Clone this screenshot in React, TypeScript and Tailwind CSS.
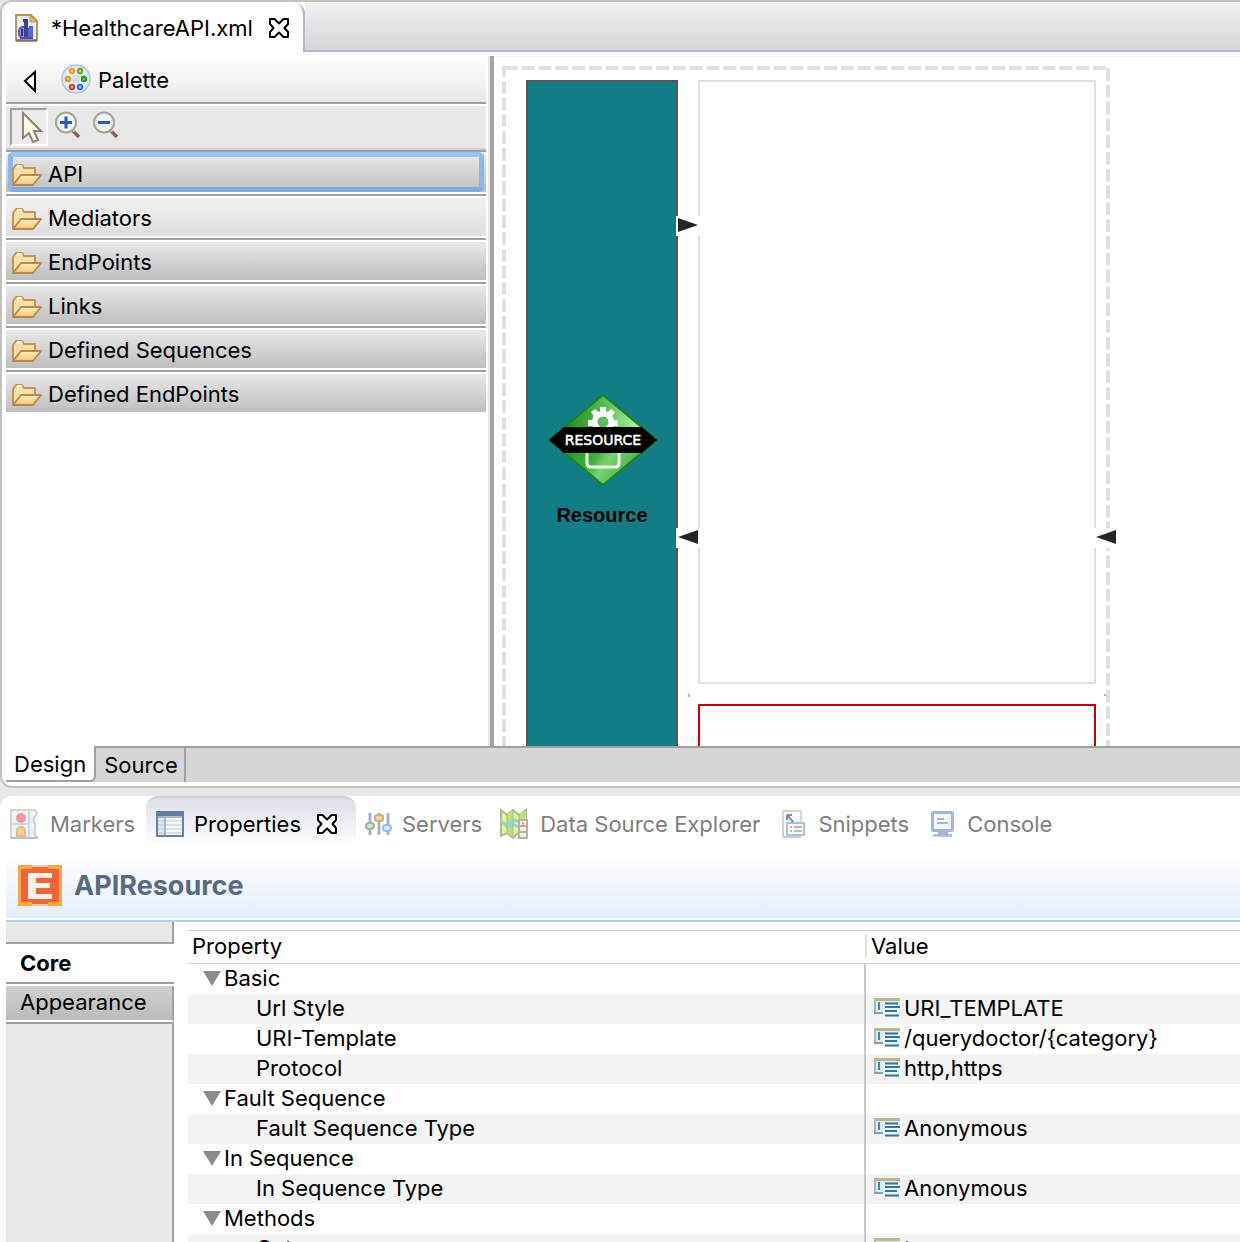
import React from "react";

function CloseIcon() {
  return (
    <svg className="h-6 w-6 shrink-0" viewBox="0 0 24 24" fill="#fff" stroke="#000" strokeWidth="2" strokeLinejoin="round" aria-hidden="true">
      <path d="M3 3h4.500l4.500 4.500 4.500-4.500H21v5l-3.500 4 3.500 4v5h-4.500l-4.500-4.500-4.500 4.500H3v-5l3.500-4L3 8z" />
    </svg>
  );
}

function FileIcon() {
  return (
    <svg className="h-7 w-6 shrink-0" viewBox="0 0 24 28" aria-hidden="true">
      <path d="M1 1h15l6 6v20H1z" fill="#e9edfa" />
      <path d="M1 27V1h15l6 6v20" fill="none" stroke="#b8985a" strokeWidth="2" />
      <path d="M15 1l7 7h-7z" fill="#e3bd6c" stroke="#b8985a" strokeWidth="1" />
      <path d="M1 26.500h21" stroke="#857052" strokeWidth="2.500" />
      <rect x="4" y="13" width="10" height="11" rx="4" fill="#8f98e0" stroke="#5a60c4" strokeWidth="2" />
      <path d="M8 5h5v18H9V8H8z" fill="#3f3f94" />
      <path d="M14 12h4v12h-4z" fill="#5c62cc" />
      <path d="M7 15v7" stroke="#303080" strokeWidth="2" />
      <path d="M5 24h13" stroke="#4b50b8" strokeWidth="2" />
    </svg>
  );
}

function PaletteIcon() {
  return (
    <svg className="h-8 w-8 shrink-0" viewBox="0 0 32 32" aria-hidden="true">
      <circle cx="16" cy="16" r="14" fill="#dfe9f6" stroke="#b4c6e2" strokeWidth="1.500" />
      <circle cx="16" cy="16" r="11" fill="#eef4fb" />
      <circle cx="16" cy="16" r="4" fill="#d0deef" />
      <g strokeWidth="2">
        <circle cx="12" cy="8" r="2.200" fill="#ffd75a" stroke="#f39a1f" />
        <circle cx="20" cy="8" r="2.200" fill="#c6e87a" stroke="#66ac20" />
        <circle cx="8" cy="16" r="2.200" fill="#ffdb8e" stroke="#ee8c1c" />
        <circle cx="24" cy="16" r="2.200" fill="#74c95a" stroke="#27941a" />
        <circle cx="12" cy="24" r="2.200" fill="#f29a96" stroke="#d44046" />
        <circle cx="20" cy="24" r="2.200" fill="#9cc7f7" stroke="#2f74d8" />
      </g>
    </svg>
  );
}

function MagnifierIcon({ plus }: { plus?: boolean }) {
  return (
    <svg className="h-7 w-7" viewBox="0 0 28 28" aria-hidden="true">
      <path d="M18 19l7 7" stroke="#866155" strokeWidth="3.500" />
      <path d="M17.500 17.500l3 3" stroke="#c9bfae" strokeWidth="3" />
      <circle cx="12" cy="11.500" r="10" fill="#edf4fb" stroke="#a9a389" strokeWidth="2" />
      <path d={plus ? "M6 11.500h12M12 5.500v12" : "M6 11.500h12"} stroke="#3a53b6" strokeWidth="3" />
    </svg>
  );
}

function FolderIcon() {
  return (
    <svg className="h-6 w-8 shrink-0" viewBox="0 0 32 24" aria-hidden="true">
      <defs>
        <linearGradient id="folderFill" x1="0" y1="0" x2="0" y2="1">
          <stop offset="0" stopColor="#fff0c4" />
          <stop offset="1" stopColor="#efc878" />
        </linearGradient>
      </defs>
      <path d="M3 22V6l3-4h6l2 3h11v7" fill="#f7dfa8" stroke="#c4935a" strokeWidth="2" strokeLinejoin="round" />
      <path d="M3 22l8-10h20l-8 10z" fill="url(#folderFill)" stroke="#bc8648" strokeWidth="2" strokeLinejoin="round" />
      <path d="M7 3h5" stroke="#fff6e6" strokeWidth="2" />
    </svg>
  );
}

function MarkersIcon() {
  return (
    <svg className="h-8 w-8 shrink-0" viewBox="0 0 32 32" aria-hidden="true">
      <path d="M3 2h22v28H3z" fill="#edf3fb" />
      <path d="M3 30V2h23" fill="none" stroke="#dcd6b8" strokeWidth="2" />
      <path d="M4 16h18M21 3v26" stroke="#ccd9ec" strokeWidth="2" />
      <path d="M26 2q4 1 2 5-3 3-2 7 2 2 1 7-2 5 2 8" fill="none" stroke="#c3cede" strokeWidth="2" />
      <path d="M2 30h28" stroke="#b5c0d6" strokeWidth="2" />
      <circle cx="13" cy="10" r="5" fill="#f09aa0" />
      <path d="M9 28v-5a4 4 0 0 1 8 0v5z" fill="#f7d493" stroke="#edb878" strokeWidth="2" />
    </svg>
  );
}

function PropertiesIcon() {
  return (
    <svg className="h-7 w-8 shrink-0" viewBox="0 0 32 28" aria-hidden="true">
      <rect x="3" y="2" width="26" height="24" fill="#f5f8fd" stroke="#6c7e9b" strokeWidth="2" />
      <path d="M3 2h26v4H3z" fill="#657a9e" />
      <path d="M4 6h7v19H4z" fill="#dce6f3" />
      <path d="M4 11h24M4 15h24M4 19h24M4 23h24" stroke="#c1c7d1" />
      <path d="M4 7h24M11 7v18" stroke="#98a5ba" strokeWidth="1.500" />
    </svg>
  );
}

function ServersIcon() {
  return (
    <svg className="h-7 w-7 shrink-0" viewBox="0 0 28 28" aria-hidden="true">
      <path d="M6 3v22M15 3v22M24 3v22" stroke="#a8aecb" strokeWidth="3" />
      <rect x="2" y="13" width="8" height="6" rx="3" fill="#d2e6ca" stroke="#9dbb9b" strokeWidth="2" />
      <rect x="11" y="5" width="8" height="6" rx="2" fill="#f2d7a0" stroke="#ceb083" strokeWidth="2" />
      <rect x="19" y="15" width="8" height="6" rx="3" fill="#d5e8f7" stroke="#9bb9d4" strokeWidth="2" />
    </svg>
  );
}

function DataSourceIcon() {
  return (
    <svg className="h-8 w-8 shrink-0" viewBox="0 0 32 32" aria-hidden="true">
      <path d="M3 2l6 5 6-5 6 5 7-5v24l-7-2-6 6-6-5-6 3z" fill="#dcfa94" stroke="#b2b99a" strokeWidth="2" />
      <path d="M9 6l6-4v27l-6-4zM21 6l7-4v25l-7-2z" fill="#bfe07c" />
      <path d="M3 13l5 4 5-2 4-3 4 2M7 19l5-1 5-1 4 2" stroke="#9bd3d2" strokeWidth="3" fill="none" />
      <path d="M9 6v20M15 2v27M21 5v20" stroke="#a8b98a" strokeWidth="1" />
      <rect x="21" y="12" width="8" height="18" fill="#f1efe4" stroke="#b9b39d" strokeWidth="2" />
      <path d="M21 18h8M21 24h8" stroke="#b9b39d" strokeWidth="2" />
      <path d="M24 15.500h2" stroke="#e57f76" strokeWidth="2" />
    </svg>
  );
}

function SnippetsIcon() {
  return (
    <svg className="h-8 w-7 shrink-0" viewBox="0 0 28 32" aria-hidden="true">
      <path d="M3 3h18v26H3z" fill="#fafbfd" />
      <path d="M3 29V3h18v12" fill="none" stroke="#dfd9be" strokeWidth="2" />
      <path d="M3 17v12h18" fill="none" stroke="#c6cfdd" strokeWidth="2" />
      <path d="M7 7h5M7 7v5M7 7l7 8" stroke="#8591aa" strokeWidth="2" fill="none" />
      <rect x="7" y="15" width="17" height="12" fill="#f7fafe" stroke="#adc2df" strokeWidth="2" />
      <path d="M10 19h2M14 19h8" stroke="#eba2a2" strokeWidth="2" />
      <path d="M10 23h2M14 23h8" stroke="#a4cdb0" strokeWidth="2" />
    </svg>
  );
}

function ConsoleIcon() {
  return (
    <svg className="h-7 w-7 shrink-0" viewBox="0 0 28 28" aria-hidden="true">
      <rect x="3.500" y="2.500" width="20" height="18" rx="1" fill="#f4f7fd" stroke="#a3b9dc" strokeWidth="3" />
      <path d="M8 9h7M8 13h11" stroke="#a7b3cc" strokeWidth="2" />
      <path d="M9 21h10v4H9z" fill="#a3b4d2" />
      <path d="M4 25.500h19" stroke="#a3b9dc" strokeWidth="2.500" />
    </svg>
  );
}

function ResourceLogo() {
  return (
    <svg className="h-[44px] w-[44px] shrink-0" viewBox="0 0 44 44" aria-hidden="true">
      <path d="M0 1h14v2h16V1h14v41H30v-2H14v2H0z" fill="#f7a843" />
      <path d="M14 1h16v2H14zM14 40h16v2H14z" fill="#f9c9b4" />
      <path d="M3 5h11V3h16v2h11v33H30v2H14v-2H3z" fill="#f0643a" />
      <path d="M10 9h24v5H18v5h14v5H18v6h16v5H10z" fill="#fdf1ec" />
    </svg>
  );
}

function FieldIcon() {
  return (
    <svg className="h-5 w-[26px] shrink-0" viewBox="0 0 26 20" aria-hidden="true">
      <path d="M1 1h25v14H1z" fill="#d9edf3" />
      <path d="M0 1.500h26" stroke="#beb78c" strokeWidth="3" />
      <path d="M1 2v14" stroke="#b5b6a4" strokeWidth="2" />
      <path d="M0 15h9" stroke="#8e9fba" strokeWidth="2" />
      <path d="M5 4v8" stroke="#4a84ab" strokeWidth="2" />
      <path d="M9 5h17v14H9z" fill="#eaf5f8" />
      <path d="M11 5.500h13M11 9h15M11 13h12M11 17.500h14" stroke="#39719f" strokeWidth="2" />
    </svg>
  );
}

function ResourceDiamond() {
  return (
    <svg className="h-[94px] w-[112px]" viewBox="0 0 112 94" role="img" aria-label="Resource">
      <defs>
        <linearGradient id="diamondFill" x1="0" y1="0" x2="1" y2="0">
          <stop offset="0.100" stopColor="#138a18" />
          <stop offset="0.480" stopColor="#4fb84d" />
          <stop offset="0.850" stopColor="#b4f7a9" />
        </linearGradient>
        <linearGradient id="diamondLow" x1="0" y1="0" x2="1" y2="0.300">
          <stop offset="0.150" stopColor="#1e9324" />
          <stop offset="0.500" stopColor="#41ae42" />
          <stop offset="0.620" stopColor="#7ad274" />
          <stop offset="0.850" stopColor="#4fb94e" />
        </linearGradient>
      </defs>
      <path d="M57 2L111 47H3z" fill="url(#diamondFill)" />
      <path d="M3 47h108L57 92z" fill="url(#diamondLow)" />
      <path d="M57 2l54 45-54 45L3 47z" fill="none" stroke="#237f20" strokeWidth="2" strokeLinejoin="round" />
      <g fill="#fff">
        <circle cx="57" cy="29" r="11" />
        <path d="M54 14h6v6h-6zM42 27h6v6h-6zM66 27h6v6h-6z" />
        <path d="M45 19l4-3 5 5-5 4zM69 19l-4-3-5 5 5 4z" />
      </g>
      <circle cx="57" cy="29" r="5.500" fill="#5bbd55" />
      <path d="M41 58v12q0 4 4 4h24q4 0 4-4V58" fill="none" stroke="#edffeb" strokeWidth="3" />
      <path d="M18 34h78l15 13-15 13H18L3 47z" fill="#000" />
      <text x="57" y="52" textAnchor="middle" fill="#fff" stroke="#fff" strokeWidth="0.500" fontSize="14" fontFamily="DejaVu Sans, sans-serif">RESOURCE</text>
    </svg>
  );
}

function Arrow({ left }: { left?: boolean }) {
  return (
    <svg className="block h-5 w-6 bg-white" viewBox="0 0 24 20" aria-hidden="true">
      <path d={left ? "M22 2v14L2 9z" : "M2 2v14l20-7z"} fill="#262626" />
    </svg>
  );
}

const drawers = [
  { name: "API", state: "focused" },
  { name: "Mediators", state: "light" },
  { name: "EndPoints", state: "plain" },
  { name: "Links", state: "plain" },
  { name: "Defined Sequences", state: "plain" },
  { name: "Defined EndPoints", state: "plain" },
];

const drawerStyle: Record<string, string> = {
  focused: "bg-linear-to-b from-[#e8e8e8] to-[#bfbfbf]",
  light: "bg-linear-to-b from-[#f2f2f2] to-[#dedede]",
  plain: "bg-linear-to-b from-[#e8e8e8] to-[#bfbfbf]",
};

function Palette() {
  return (
    <aside className="flex w-[480px] shrink-0 flex-col">
      <header className="flex h-[46px] shrink-0 items-center bg-linear-to-b from-white to-[#e8e8e8] pt-1">
        <button type="button" aria-label="Collapse palette" className="mr-5 ml-4 h-6 w-4">
          <svg className="h-6 w-4" viewBox="0 0 16 24" aria-hidden="true">
            <path d="M3 12L13 3v19z" fill="#fff" stroke="#000" strokeWidth="2" />
          </svg>
        </button>
        <span className="ml-0.5 flex items-center gap-1.5 pb-1"><PaletteIcon /><span className="pt-0.5">Palette</span></span>
      </header>
      <div className="h-1 shrink-0 border-t-2 border-[#a0a0a0] bg-white" />
      <div className="flex h-11 shrink-0 items-center border-b-2 border-[#d0d0d0] bg-[#e8e8e8] pl-1">
        <button type="button" aria-label="Select" aria-pressed="true" className="flex h-[38px] w-[38px] items-center justify-center border-2 border-t-[#a0a0a0] border-r-white border-b-white border-l-[#a0a0a0] bg-[#ececec]">
          <svg className="ml-1 h-8 w-6" viewBox="0 0 24 32" aria-hidden="true">
            <path d="M4 2v25l6-5 4 9 5-2-4-9h7z" fill="#fffbe6" stroke="#8a8574" strokeWidth="2" />
          </svg>
        </button>
        <button type="button" aria-label="Zoom in" className="ml-1.5 pb-1"><MagnifierIcon plus /></button>
        <button type="button" aria-label="Zoom out" className="ml-2.5 pb-1"><MagnifierIcon /></button>
      </div>
      <div className="flex flex-col">
        {drawers.map((d) => (
          <div key={d.name} className="border-t-2 border-[#a0a0a0] bg-white pt-0.5 pb-0.5">
            <button type="button" className={`relative flex h-[38px] w-full items-center pl-1 text-left ${drawerStyle[d.state]}`}>
              {d.state === "focused" && <span className="absolute -top-0.5 right-0.5 bottom-0 left-0.5 rounded-[5px] border-[5px] border-t-[#93c4f7] border-r-[#89b7ea] border-b-[#82acde] border-l-[#89b7ea]" />}
              <span className="relative flex items-center gap-1.5 pt-1"><FolderIcon /><span className="pb-0.5">{d.name}</span></span>
            </button>
          </div>
        ))}
      </div>
    </aside>
  );
}

function Canvas() {
  return (
    <main className="relative min-w-0 flex-1 overflow-hidden border-t border-[#eeeeee]">
      <svg className="absolute top-2 left-2 h-[800px] w-[608px]" viewBox="0 0 608 800" fill="none" stroke="#e0e0e0" strokeWidth="4" strokeDasharray="12.800 4" aria-hidden="true">
        <path d="M3 3H606" />
        <path d="M2 1V800" strokeDashoffset="2" />
        <path d="M606 1V800" strokeDashoffset="-2" />
      </svg>
      <section className="absolute top-[23px] left-8 flex h-[720px] w-[152px] flex-col items-center border-2 border-[#585858] bg-[#117d85] pt-[311px]">
        <ResourceDiamond />
        <h2 className="mt-4 font-['Liberation_Sans',sans-serif] text-[20px] leading-6 font-bold">Resource</h2>
      </section>
      <div className="absolute top-[23px] left-[204px] h-[604px] w-[398px] border-2 border-[#e0e0e0]" />
      <div className="absolute top-[647px] left-[204px] h-[160px] w-[398px] border-2 border-[#c9000c]" />
      <div className="absolute top-[159px] left-[182px]"><Arrow /></div>
      <div className="absolute top-[471px] left-[182px]"><Arrow left /></div>
      <div className="absolute top-[471px] left-[600px]"><Arrow left /></div>
      <div className="absolute top-[637px] left-[194px] h-[3px] w-0.5 bg-[#b4b4b4]" />
      <div className="absolute top-[637px] left-[610px] h-0.5 w-0.5 bg-[#b4b4b4]" />
    </main>
  );
}

function Editor() {
  return (
    <section className="flex min-h-0 flex-[784] flex-col overflow-hidden rounded-l-xl border-y-2 border-l-2 border-[#c2c2ba] bg-white">
      <div role="tablist" className="flex h-[50px] shrink-0">
        <button role="tab" type="button" aria-selected="true" className="flex items-center rounded-tr-xl border-r-2 border-[#b4b8cc] bg-white pt-0.5 pr-3 pl-[13px]">
          <FileIcon />
          <span className="ml-3">*HealthcareAPI.xml</span>
          <span className="ml-3.5"><CloseIcon /></span>
        </button>
        <div className="flex-1 border-b-2 border-[#b4b8cc] bg-linear-to-b from-[#f2f2f2] to-[#d6d6d6]" />
      </div>
      <div className="flex min-h-0 flex-1 pt-1 pl-1">
        <Palette />
        <div className="ml-0.5 w-1.5 shrink-0 border-r-4 border-l-2 border-r-[#a3a3a3] border-l-[#e8e8e8]" />
        <Canvas />
      </div>
      <div role="tablist" className="mb-1 ml-1 flex h-9 shrink-0 bg-[#d6d6d6]">
        <button role="tab" type="button" aria-selected="true" className="rounded-br-md border-r-2 border-b-2 border-[#a0a0a0] bg-white px-2 pt-0.5">Design</button>
        <button role="tab" type="button" className="border-t-2 border-r-2 border-[#a0a0a0] pr-1.5 pl-2">Source</button>
        <div className="flex-1 border-t-2 border-[#a0a0a0]" />
      </div>
    </section>
  );
}

function ViewTab({ icon, name }: { icon: React.ReactNode; name: string }) {
  return (
    <button role="tab" type="button" className="flex items-center gap-2.5 whitespace-nowrap text-[#808080]">
      {icon}
      {name}
    </button>
  );
}

type Row = { label: string; value?: string };
const rows: Row[] = [
  { label: "Basic" },
  { label: "Url Style", value: "URI_TEMPLATE" },
  { label: "URI-Template", value: "/querydoctor/{category}" },
  { label: "Protocol", value: "http,https" },
  { label: "Fault Sequence" },
  { label: "Fault Sequence Type", value: "Anonymous" },
  { label: "In Sequence" },
  { label: "In Sequence Type", value: "Anonymous" },
  { label: "Methods" },
  { label: "Get", value: "true" },
];

function PropertyTable() {
  return (
    <div className="mt-2 ml-3.5 min-w-0 flex-1 overflow-hidden">
      <table className="w-full table-fixed border-collapse text-left">
        <colgroup>
          <col className="w-[677px]" />
          <col />
        </colgroup>
        <thead>
          <tr className="h-[33px] border-y border-[#d0d0d0]">
            <th scope="col" className="p-0 pb-0.5 pl-1 font-normal">Property</th>
            <th scope="col" className="p-0 pb-0.5 font-normal"><span className="block border-l-2 border-[#e2e2e2] pl-1 leading-6">Value</span></th>
          </tr>
        </thead>
        <tbody>
          {rows.map((r, i) => (
            <tr key={r.label} className={i % 2 ? "h-[30px] bg-[#f4f4f4]" : "h-[30px] bg-white"}>
              <td className={r.value ? "p-0 pb-0.5 pl-[68px]" : "p-0 pb-0.5 pl-[15px]"}>
                {r.value ? (
                  r.label
                ) : (
                  <button type="button" aria-expanded="true" className="flex items-center gap-[3px]">
                    <svg className="h-[15px] w-[18px]" viewBox="0 0 18 15" aria-hidden="true"><path d="M0 0h18L9 15z" fill="#8c8c8c" /></svg>
                    {r.label}
                  </button>
                )}
              </td>
              <td className="border-l-2 border-[#c8c8c8] p-0 pb-0.5 pl-2">
                {r.value && <span className="flex items-center gap-1"><FieldIcon />{r.value}</span>}
              </td>
            </tr>
          ))}
        </tbody>
      </table>
    </div>
  );
}

function PropertiesView() {
  return (
    <section className="mt-2 flex min-h-0 flex-[446] flex-col overflow-hidden rounded-tl-xl bg-white">
      <div role="tablist" className="flex h-[50px] shrink-0 pl-2">
        <div className="flex w-[138px] pt-1.5"><ViewTab icon={<MarkersIcon />} name="Markers" /></div>
        <button role="tab" type="button" aria-selected="true" className="flex w-[210px] items-center rounded-t-xl border-t-2 border-[#cfd0dc] bg-linear-to-b from-[#dedfe7] to-white pt-1 pl-2">
          <PropertiesIcon />
          <span className="ml-2">Properties</span>
          <span className="ml-3.5"><CloseIcon /></span>
        </button>
        <div className="flex pt-1.5 pl-2">
          <ViewTab icon={<ServersIcon />} name="Servers" />
          <div className="mr-5 ml-4 flex"><ViewTab icon={<DataSourceIcon />} name="Data Source Explorer" /></div>
          <ViewTab icon={<SnippetsIcon />} name="Snippets" />
          <div className="ml-5 flex"><ViewTab icon={<ConsoleIcon />} name="Console" /></div>
        </div>
      </div>
      <header className="mt-2 ml-1.5 flex h-[66px] shrink-0 items-center gap-3 border-b-2 border-white bg-linear-to-b from-white to-[#e3eefa] pl-3">
        <ResourceLogo />
        <h1 className="text-[27px] leading-8 font-bold text-[#596b81]">APIResource</h1>
      </header>
      <div className="ml-1.5 flex min-h-0 flex-1 border-t-2 border-[#b2d0ef]">
        <nav className="flex w-[168px] shrink-0 flex-col" aria-label="Property groups">
          <div className="h-5 border-r-2 border-[#a0a0a0] bg-[#e8e8e8]" />
          <button type="button" className="h-[42px] border-y-2 border-[#a0a0a0] bg-white pl-3.5 text-left font-bold">Core</button>
          <button type="button" className="mt-0.5 h-9 border-r-2 border-b-2 border-r-[#a0a0a0] border-b-white bg-linear-to-b from-[#cfcfcf] to-[#bcbcbc] pb-0.5 pl-3.5 text-left">Appearance</button>
          <div className="flex-1 border-t-2 border-r-2 border-[#a0a0a0] bg-[#e8e8e8]" />
        </nav>
        <PropertyTable />
      </div>
    </section>
  );
}

export default function App() {
  return (
    <div className="flex h-screen flex-col overflow-hidden bg-[#e8e8e8] font-['Inter',sans-serif] text-[22px] leading-7 text-black">
      <Editor />
      <PropertiesView />
    </div>
  );
}
